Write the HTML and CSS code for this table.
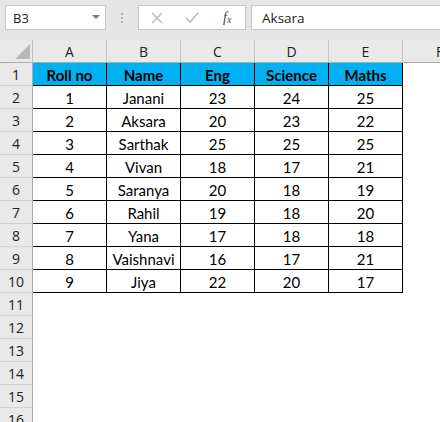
FILE: index.html
```html
<!DOCTYPE html>
<html>
<head>
<meta charset="utf-8">
<link rel="stylesheet" href="styles.css">
</head>
<body>
<div class="app">
  <div class="topbar">
    <div class="namebox"><span>B3</span><span class="caret"></span></div>
    <div class="dots"><i></i><i></i><i></i></div>
    <div class="btnbox">
      <svg class="ico" width="14" height="14" viewBox="0 0 14 14"><path d="M2 2 L12 12 M12 2 L2 12" stroke="#bdbdbd" stroke-width="1.5" fill="none"/></svg>
      <svg class="ico" width="16" height="14" viewBox="0 0 16 14"><path d="M2 7 L6 11 L14 2" stroke="#bdbdbd" stroke-width="1.6" fill="none"/></svg>
      <span class="fx">f<sub>x</sub></span>
    </div>
    <div class="formula">Aksara</div>
  </div>
  <div class="sheet">
    <div class="corner"><span class="tri"></span></div>
    <div class="ch">A</div><div class="ch">B</div><div class="ch">C</div><div class="ch">D</div><div class="ch">E</div><div class="ch">F</div>

    <div class="rh">1</div><div class="c hd">Roll no</div><div class="c hd">Name</div><div class="c hd">Eng</div><div class="c hd">Science</div><div class="c hd">Maths</div><div class="e"></div>
    <div class="rh">2</div><div class="c">1</div><div class="c">Janani</div><div class="c">23</div><div class="c">24</div><div class="c">25</div><div class="e"></div>
    <div class="rh">3</div><div class="c">2</div><div class="c">Aksara</div><div class="c">20</div><div class="c">23</div><div class="c">22</div><div class="e"></div>
    <div class="rh">4</div><div class="c">3</div><div class="c">Sarthak</div><div class="c">25</div><div class="c">25</div><div class="c">25</div><div class="e"></div>
    <div class="rh">5</div><div class="c">4</div><div class="c">Vivan</div><div class="c">18</div><div class="c">17</div><div class="c">21</div><div class="e"></div>
    <div class="rh">6</div><div class="c">5</div><div class="c">Saranya</div><div class="c">20</div><div class="c">18</div><div class="c">19</div><div class="e"></div>
    <div class="rh">7</div><div class="c">6</div><div class="c">Rahil</div><div class="c">19</div><div class="c">18</div><div class="c">20</div><div class="e"></div>
    <div class="rh">8</div><div class="c">7</div><div class="c">Yana</div><div class="c">17</div><div class="c">18</div><div class="c">18</div><div class="e"></div>
    <div class="rh">9</div><div class="c">8</div><div class="c">Vaishnavi</div><div class="c">16</div><div class="c">17</div><div class="c">21</div><div class="e"></div>
    <div class="rh">10</div><div class="c">9</div><div class="c">Jiya</div><div class="c">22</div><div class="c">20</div><div class="c">17</div><div class="e"></div>
    <div class="rh">11</div><div class="e span"></div>
    <div class="rh">12</div><div class="e span"></div>
    <div class="rh">13</div><div class="e span"></div>
    <div class="rh">14</div><div class="e span"></div>
    <div class="rh">15</div><div class="e span"></div>
    <div class="rh">16</div><div class="e span"></div>
  </div>
</div>
</body>
</html>
```

FILE: styles.css
```css
html, body {
  margin: 0;
  padding: 0;
  background: #ffffff;
}
.app {
  width: 440px;
  height: 422px;
  overflow: hidden;
  font-family: Lato, "Open Sans", sans-serif;
  color: #000;
}
.topbar {
  height: 40px;
  background: #e6e6e6;
  display: flex;
  align-items: flex-start;
  padding: 5px 0 0 5px;
  box-sizing: border-box;
}
.namebox {
  width: 101px;
  height: 25px;
  box-sizing: border-box;
  background: #fff;
  border: 1px solid #c6c6c6;
  display: flex;
  align-items: center;
  justify-content: space-between;
  padding: 0 5px 0 7px;
  font-family: "Open Sans", sans-serif;
  font-size: 13px;
  color: #222;
}
.caret {
  width: 0;
  height: 0;
  border-left: 4px solid transparent;
  border-right: 4px solid transparent;
  border-top: 4px solid #7a7a7a;
  margin-top: -2px;
}
.dots {
  width: 32px;
  height: 25px;
  display: flex;
  flex-direction: column;
  align-items: center;
  justify-content: center;
  gap: 2px;
}
.dots i {
  display: block;
  width: 2px;
  height: 2px;
  background: #b0b0b0;
}
.btnbox {
  width: 108px;
  height: 25px;
  box-sizing: border-box;
  background: #fff;
  border: 1px solid #c6c6c6;
  display: flex;
  align-items: center;
  padding: 0 0 0 11px;
  gap: 20px;
}
.fx {
  font-family: "Liberation Serif", serif;
  font-style: italic;
  font-size: 14px;
  color: #444;
  margin-left: 3px;
}
.fx sub {
  font-size: 10px;
  vertical-align: -1px;
}
.formula {
  flex: 1;
  height: 25px;
  box-sizing: border-box;
  margin-left: 5px;
  background: #fff;
  border: 1px solid #c6c6c6;
  border-right: none;
  display: flex;
  align-items: center;
  padding-left: 10px;
  font-family: "Open Sans", sans-serif;
  font-size: 13.5px;
  color: #222;
}
.sheet {
  display: grid;
  grid-template-columns: 33px repeat(6, 74px);
  grid-auto-rows: 23px;
}
.sheet > div {
  box-sizing: border-box;
}
.corner {
  background: #e9e9e9;
  border-right: 1px solid #c0c0c0;
  border-bottom: 1px solid #ababab;
  position: relative;
}
.tri {
  position: absolute;
  right: 2px;
  bottom: 3px;
  width: 0;
  height: 0;
  border-left: 15px solid transparent;
  border-bottom: 15px solid #b8b8b8;
}
.ch {
  background: #e9e9e9;
  border-right: 1px solid #c6c6c6;
  border-bottom: 1px solid #ababab;
  display: flex;
  align-items: center;
  justify-content: center;
  font-family: "Open Sans", sans-serif;
  font-size: 14px;
  color: #222;
  padding-top: 1px;
}
.rh {
  background: #e9e9e9;
  border-right: 1px solid #ababab;
  border-bottom: 1px solid #d2d2d2;
  display: flex;
  align-items: center;
  justify-content: center;
  font-family: "Open Sans", sans-serif;
  font-size: 14px;
  color: #222;
  padding-top: 1px;
}
.c {
  border-right: 1px solid #000;
  border-bottom: 1px solid #000;
  display: flex;
  align-items: center;
  justify-content: center;
  font-size: 15px;
  padding-top: 2px;
  white-space: nowrap;
}
.hd {
  background: #00b0f0;
  font-weight: bold;
}
.e {
  background: #fff;
}
.e.span {
  grid-column: 2 / 8;
}
```
